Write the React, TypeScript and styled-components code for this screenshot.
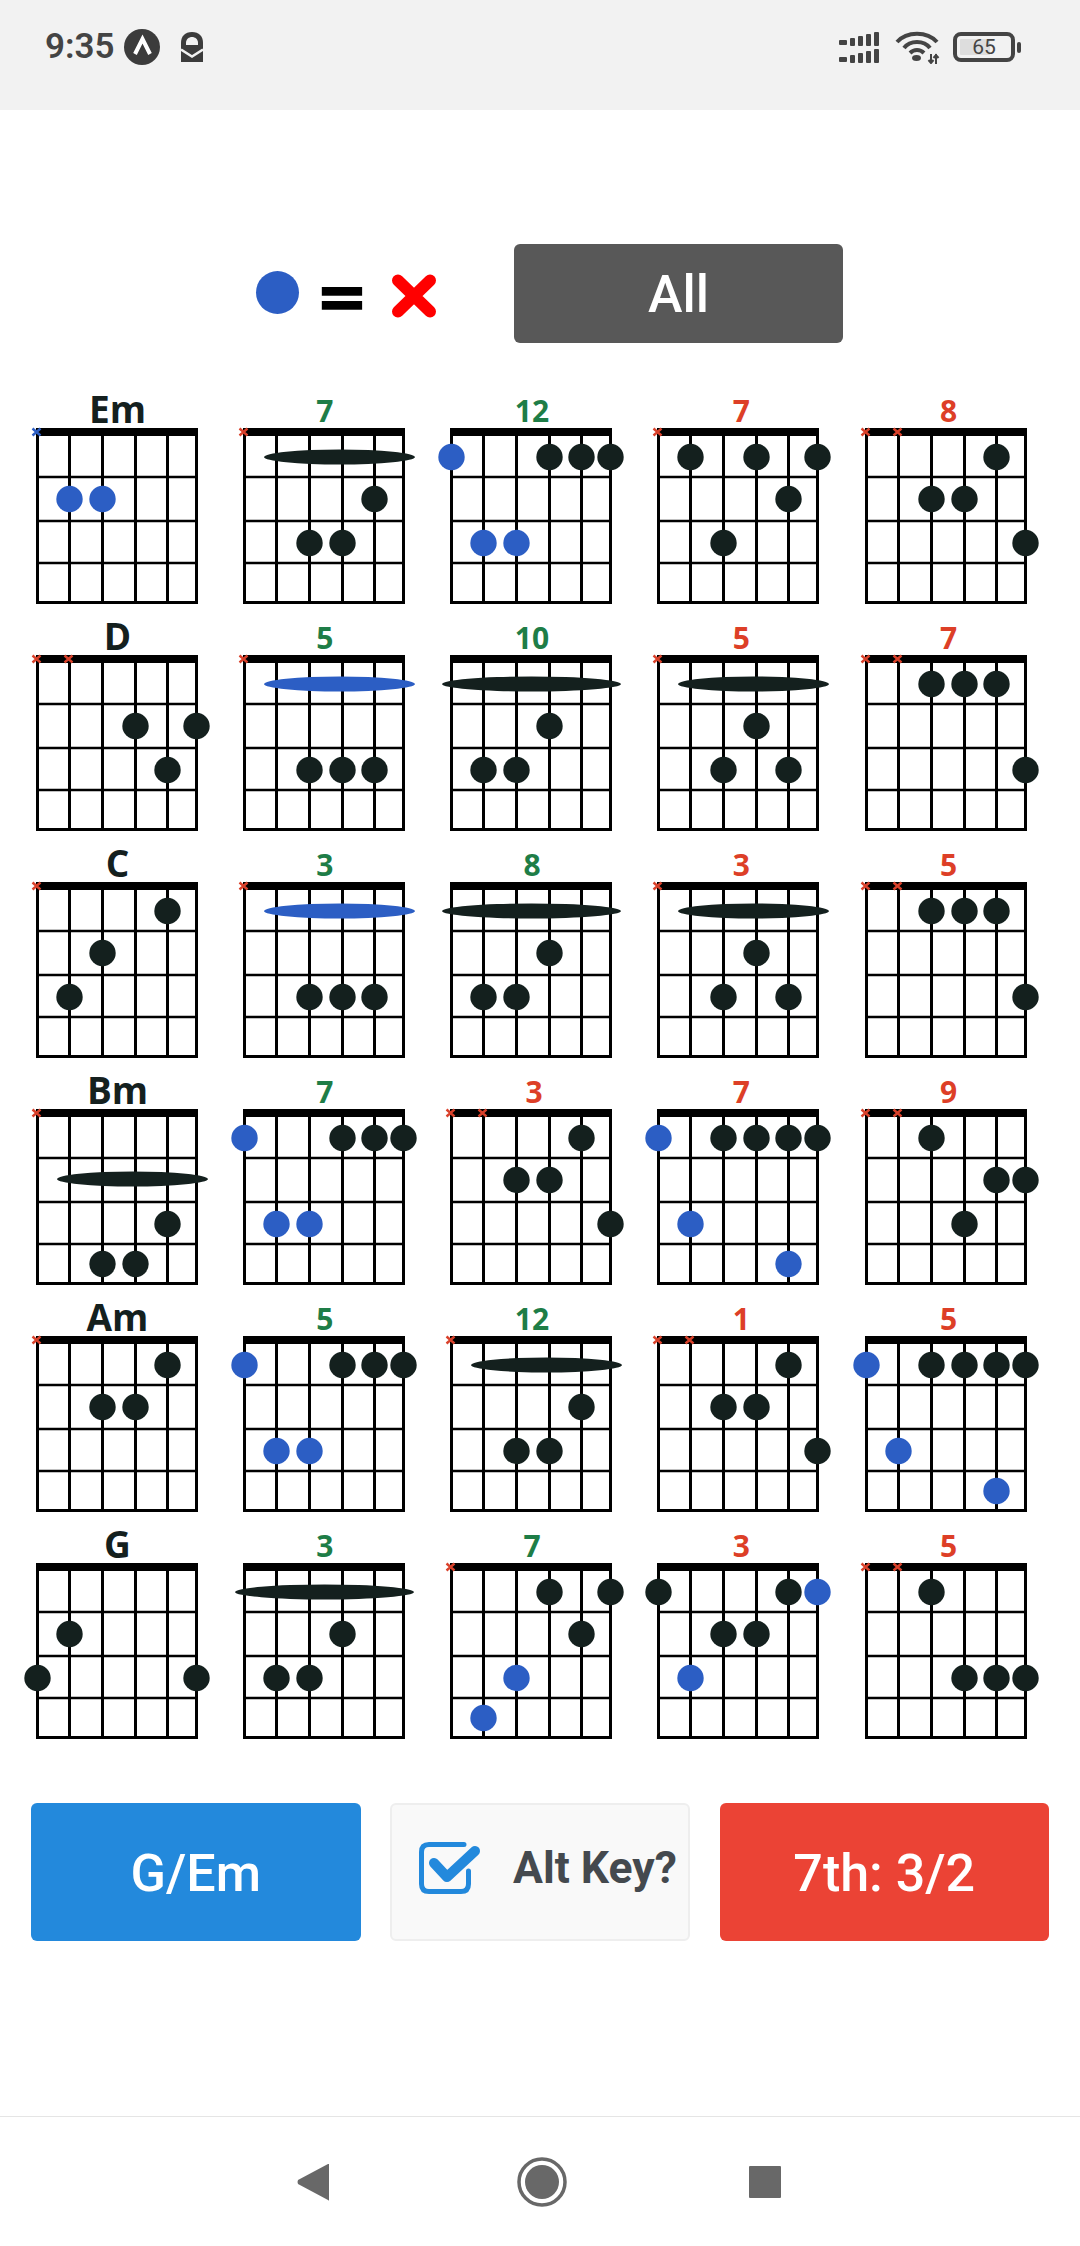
import * as React from 'react';
import styled, { createGlobalStyle } from 'styled-components';

const GlobalStyle = createGlobalStyle`
	html, body {
		margin: 0;
		padding: 0;
		background: #fff;
		font-family: Roboto, "Liberation Sans", sans-serif;
	}
`;

const BLUE = '#2c5ec4';
const DARK = '#14201e';

//Chord data: [string, fret, blue?]
type Dot = [number, number, boolean?];

interface Chord {
	label: string;
	tone: 'title' | 'green' | 'red';
	muted?: number[];
	mutedBlue?: boolean;
	barre?: { fret: number; wide?: boolean; blue?: boolean };
	dots: Dot[];
}

const chords: Chord[] = [
	// row 1
	{ label: 'Em', tone: 'title', muted: [0], mutedBlue: true, dots: [[1, 2, true], [2, 2, true]] },
	{ label: '7', tone: 'green', muted: [0], barre: { fret: 1 }, dots: [[4, 2], [2, 3], [3, 3]] },
	{ label: '12', tone: 'green', dots: [[0, 1, true], [3, 1], [4, 1], [5, 1], [1, 3, true], [2, 3, true]] },
	{ label: '7', tone: 'red', muted: [0], dots: [[1, 1], [3, 1], [5, 1], [4, 2], [2, 3]] },
	{ label: '8', tone: 'red', muted: [0, 1], dots: [[4, 1], [2, 2], [3, 2], [5, 3]] },
	// row 2
	{ label: 'D', tone: 'title', muted: [0, 1], dots: [[3, 2], [5, 2], [4, 3]] },
	{ label: '5', tone: 'green', muted: [0], barre: { fret: 1, blue: true }, dots: [[2, 3], [3, 3], [4, 3]] },
	{ label: '10', tone: 'green', barre: { fret: 1, wide: true }, dots: [[3, 2], [1, 3], [2, 3]] },
	{ label: '5', tone: 'red', muted: [0], barre: { fret: 1 }, dots: [[3, 2], [2, 3], [4, 3]] },
	{ label: '7', tone: 'red', muted: [0, 1], dots: [[2, 1], [3, 1], [4, 1], [5, 3]] },
	// row 3
	{ label: 'C', tone: 'title', muted: [0], dots: [[4, 1], [2, 2], [1, 3]] },
	{ label: '3', tone: 'green', muted: [0], barre: { fret: 1, blue: true }, dots: [[2, 3], [3, 3], [4, 3]] },
	{ label: '8', tone: 'green', barre: { fret: 1, wide: true }, dots: [[3, 2], [1, 3], [2, 3]] },
	{ label: '3', tone: 'red', muted: [0], barre: { fret: 1 }, dots: [[3, 2], [2, 3], [4, 3]] },
	{ label: '5', tone: 'red', muted: [0, 1], dots: [[2, 1], [3, 1], [4, 1], [5, 3]] },
	// row 4
	{ label: 'Bm', tone: 'title', muted: [0], barre: { fret: 2 }, dots: [[4, 3], [2, 4], [3, 4]] },
	{ label: '7', tone: 'green', dots: [[0, 1, true], [3, 1], [4, 1], [5, 1], [1, 3, true], [2, 3, true]] },
	{ label: '3', tone: 'red', muted: [0, 1], dots: [[4, 1], [2, 2], [3, 2], [5, 3]] },
	{ label: '7', tone: 'red', dots: [[0, 1, true], [2, 1], [3, 1], [4, 1], [5, 1], [1, 3, true], [4, 4, true]] },
	{ label: '9', tone: 'red', muted: [0, 1], dots: [[2, 1], [4, 2], [5, 2], [3, 3]] },
	// row 5
	{ label: 'Am', tone: 'title', muted: [0], dots: [[4, 1], [2, 2], [3, 2]] },
	{ label: '5', tone: 'green', dots: [[0, 1, true], [3, 1], [4, 1], [5, 1], [1, 3, true], [2, 3, true]] },
	{ label: '12', tone: 'green', muted: [0], barre: { fret: 1 }, dots: [[4, 2], [2, 3], [3, 3]] },
	{ label: '1', tone: 'red', muted: [0, 1], dots: [[4, 1], [2, 2], [3, 2], [5, 3]] },
	{ label: '5', tone: 'red', dots: [[0, 1, true], [2, 1], [3, 1], [4, 1], [5, 1], [1, 3, true], [4, 4, true]] },
	// row 6
	{ label: 'G', tone: 'title', dots: [[1, 2], [0, 3], [5, 3]] },
	{ label: '3', tone: 'green', barre: { fret: 1, wide: true }, dots: [[3, 2], [1, 3], [2, 3]] },
	{ label: '7', tone: 'green', muted: [0], dots: [[3, 1], [5, 1], [4, 2], [2, 3, true], [1, 4, true]] },
	{ label: '3', tone: 'red', dots: [[0, 1], [4, 1], [5, 1, true], [2, 2], [3, 2], [1, 3, true]] },
	{ label: '5', tone: 'red', muted: [0, 1], dots: [[2, 1], [3, 3], [4, 3], [5, 3]] }
];

const STRING_X = [1.5, 33.5, 66.5, 99.5, 131.5, 160.5];
const FRET_Y = [49, 93, 135, 174.5];
const DOT_Y = [0, 29, 71, 115, 155];

//Page
const Page = styled.div`
	width: 1080px;
	height: 2246px;
	display: flex;
	flex-direction: column;
	background: #fff;
	overflow: hidden;
`;

//Status bar
const StatusBar = styled.div`
	height: 94px;
	padding: 0 59px 16px 45px;
	background: #f2f2f2;
	display: flex;
	align-items: center;
	color: #444;
`;

const Clock = styled.span`
	font-size: 35px;
	font-weight: 600;
	line-height: 36px;
	margin-right: 9px;
`;

const StatusLeft = styled.div`
	display: flex;
	align-items: center;
	flex: 1;
`;

const StatusRight = styled.div`
	display: flex;
	align-items: center;
`;

const Battery = styled.div`
	box-sizing: border-box;
	width: 62px;
	height: 30px;
	margin-left: 13px;
	border: 4px solid #444;
	border-radius: 8px;
	background: linear-gradient(90deg, #ddd 0, #ddd 62%, #f2f2f2 62%);
	background-clip: content-box;
	padding: 3px;
	display: flex;
	align-items: center;
	justify-content: center;
	font-size: 21px;
	line-height: 16px;
	color: #444;
`;

const BatteryNub = styled.div`
	width: 4px;
	height: 11px;
	margin-left: 2px;
	border-radius: 2px;
	background: #444;
`;

//Legend row
const Legend = styled.div`
	display: flex;
	align-items: center;
	height: 99px;
	padding: 134px 0 0 256px;
`;

const LegendDot = styled.div`
	width: 43px;
	height: 43px;
	border-radius: 50%;
	background: ${BLUE};
	margin-top: -2px;
`;

const EqualsSign = styled.span`
	margin: 7px 0 0 17px;
	font-family: "DejaVu Sans", sans-serif;
	font-weight: 700;
	font-size: 62px;
	line-height: 60px;
	color: #000;
	-webkit-text-stroke: 1.5px #000;
`;

const LegendCross = styled.svg`
	margin: 4px 0 0 23px;
	flex: none;
`;

const AllButton = styled.div`
	box-sizing: border-box;
	width: 329px;
	height: 99px;
	margin-left: 77px;
	padding-top: 2px;
	border-radius: 6px;
	background: #585858;
	color: #fff;
	font-size: 52px;
	font-weight: 500;
	display: flex;
	align-items: center;
	justify-content: center;
`;

//Chord grid
const ChordGrid = styled.div`
	display: grid;
	grid-template-columns: repeat(5, 161px);
	grid-auto-rows: 227px;
	column-gap: 46.25px;
	padding: 34px 0 0 35.5px;
`;

const ChordCell = styled.div`
	display: flex;
	flex-direction: column;
`;

const toneColor = { title: DARK, green: '#1e7d47', red: '#dd3f27' };

const ChordLabel = styled.div<{ $tone: Chord['tone'] }>`
	box-sizing: border-box;
	height: 51px;
	padding: ${props => (props.$tone === 'title' ? 14 : 17)}px 0 0 ${props => (props.$tone === 'red' ? 7 : 3)}px;
	text-align: center;
	font-family: "Open Sans", sans-serif;
	font-weight: 700;
	font-size: ${props => (props.$tone === 'title' ? 37 : 30)}px;
	line-height: ${props => (props.$tone === 'title' ? 36 : 34)}px;
	color: ${props => toneColor[props.$tone]};
`;

const DiagramSvg = styled.svg`
	display: block;
	overflow: visible;
`;

const ChordDiagram: React.FC<{ chord: Chord }> = ({ chord }) => (
	<DiagramSvg width={161} height={176} viewBox="0 0 161 176">
		{STRING_X.map(x => (
			<rect key={x} x={x - 1.5} y={4} width={3} height={172} fill="#000" />
		))}
		{FRET_Y.map((y, i) => (
			<rect key={y} x={0} y={y - (i === 3 ? 1.5 : 1.25)} width={162} height={i === 3 ? 3 : 2.5} fill="#000" />
		))}
		<rect x={0} y={0} width={162} height={8} fill="#000" />
		{(chord.muted || []).map(s => (
			<path
				key={s}
				d={`M${STRING_X[s] - 5} 0.5 L${STRING_X[s] + 3} 7.5 M${STRING_X[s] + 3} 0.5 L${STRING_X[s] - 5} 7.5`}
				stroke={chord.mutedBlue ? BLUE : '#d9412b'}
				strokeWidth={2.4}
				fill="none"
			/>
		))}
		{chord.barre && (
			<ellipse
				cx={chord.barre.wide ? 81.5 : 96.5}
				cy={DOT_Y[chord.barre.fret] - (chord.barre.fret === 2 ? 1 : 0)}
				rx={chord.barre.wide ? 89.5 : 75.5}
				ry={7.5}
				fill={chord.barre.blue ? BLUE : DARK}
			/>
		)}
		{chord.dots.map(([s, f, blue]) => (
			<circle key={`${s}-${f}`} cx={STRING_X[s]} cy={DOT_Y[f]} r={13.2} fill={blue ? BLUE : DARK} />
		))}
	</DiagramSvg>
);

//Bottom action row
const Actions = styled.div`
	display: flex;
	justify-content: space-between;
	margin-top: 64px;
	padding: 0 31px;
`;

const ActionButton = styled.div<{ $color: string }>`
	box-sizing: border-box;
	width: 329.5px;
	height: 138px;
	padding-top: 2px;
	border-radius: 6px;
	background: ${props => props.$color};
	color: #fff;
	font-size: 52px;
	font-weight: 500;
	display: flex;
	align-items: center;
	justify-content: center;
`;

const AltToggle = styled.div`
	box-sizing: border-box;
	width: 300px;
	height: 138px;
	padding: 0 0 8px 27px;
	border: 2px solid #eee;
	border-radius: 6px;
	background: #f9f9f9;
	display: flex;
	align-items: center;
	color: #44494e;
	font-size: 44.5px;
	font-weight: 700;
	white-space: nowrap;
`;

const AltLabel = styled.span`
	margin-left: 32px;
`;

const AltCheck = styled.svg`
	flex: none;
`;

//Navigation bar
const NavBar = styled.div`
	margin-top: auto;
	height: 129px;
	border-top: 1px solid #e5e5e5;
	display: flex;
	align-items: center;
	justify-content: center;
	padding-right: 3px;
`;

const NavIcons = styled.svg`
	display: block;
`;

const MailIcon = styled.svg`
	margin-left: 21px;
`;

const WifiIcon = styled.svg`
	margin-left: 16px;
`;

const StatusIcons = {
	Arrow: () => (
		<svg width={36} height={36} viewBox="0 0 36 36">
			<circle cx={18} cy={18} r={18} fill="#3c3c3c" />
			<path d="M11 25 L18.5 10 L26 25" stroke="#fff" strokeWidth={4} fill="none" />
		</svg>
	),
	Mail: () => (
		<MailIcon width={22} height={30} viewBox="0 0 22 30">
			<path d="M0 11 C0 4 4 0 11 0 C18 0 22 4 22 11 V30 H0 Z" fill="#3c3c3c" />
			<path d="M5 13 V11 C5 7 8 5 11 5 C14 5 17 7 17 11 V13 Z" fill="#f2f2f2" />
			<path d="M0 17.5 L11 24.5 L22 17.5" stroke="#f2f2f2" strokeWidth={2.5} fill="none" />
		</MailIcon>
	),
	Signal: () => (
		<svg width={40} height={31} viewBox="0 0 40 31">
			{[0, 17].map(y => (
				<g key={y} fill="#444">
					<rect x={0} y={y + 8} width={8} height={5} rx={1} />
					<rect x={11} y={y + 6} width={5} height={8} rx={1} />
					<rect x={19} y={y + 4} width={5} height={10} rx={1} />
					<rect x={27} y={y + 2} width={5} height={12} rx={1} />
					<rect x={35} y={y} width={5} height={14} rx={1} />
				</g>
			))}
		</svg>
	),
	Wifi: () => (
		<WifiIcon width={45} height={33} viewBox="0 0 45 33">
			<g fill="none" stroke="#444" strokeWidth={4}>
				<path d="M2 11 C12 0 32 0 42 11" />
				<path d="M9 17 C15 9 29 9 35 17" />
				<path d="M15 22 C19 18 25 18 29 22" />
			</g>
			<ellipse cx={21.5} cy={27} rx={4.5} ry={3} fill="#444" />
			<path d="M36 23 V33 M41 23 V33 M33.5 29 L36 32 L38.5 29 M38.5 27 L41 24 L43.5 27" stroke="#444" strokeWidth={2} fill="none" />
		</WifiIcon>
	)
};

const App: React.FC = () => (
	<Page>
		<GlobalStyle />
		<StatusBar>
			<StatusLeft>
				<Clock>9:35</Clock>
				<StatusIcons.Arrow />
				<StatusIcons.Mail />
			</StatusLeft>
			<StatusRight>
				<StatusIcons.Signal />
				<StatusIcons.Wifi />
				<Battery>65</Battery>
				<BatteryNub />
			</StatusRight>
		</StatusBar>

		<Legend>
			<LegendDot />
			<EqualsSign>=</EqualsSign>
			<LegendCross width={46} height={46} viewBox="0 0 46 46">
				<path d="M7 7.5 L39 38.5 M39 7.5 L7 38.5" stroke="#f00" strokeWidth={12} strokeLinecap="round" />
			</LegendCross>
			<AllButton>All</AllButton>
		</Legend>

		<ChordGrid>
			{chords.map((chord, i) => (
				<ChordCell key={i}>
					<ChordLabel $tone={chord.tone}>{chord.label}</ChordLabel>
					<ChordDiagram chord={chord} />
				</ChordCell>
			))}
		</ChordGrid>

		<Actions>
			<ActionButton $color="#2389dc">G/Em</ActionButton>
			<AltToggle>
				<AltCheck width={62} height={52} viewBox="0 0 62 52">
					<path d="M45 2.5 H10 Q2.5 2.5 2.5 10 V42 Q2.5 49.5 10 49.5 H42 Q49.5 49.5 49.5 42 V29" fill="none" stroke="#2389dc" strokeWidth={5} strokeLinecap="round" />
					<path d="M15 21 L28 35 L56 9" fill="none" stroke="#2389dc" strokeWidth={10} strokeLinecap="round" strokeLinejoin="round" />
				</AltCheck>
				<AltLabel>Alt Key?</AltLabel>
			</AltToggle>
			<ActionButton $color="#eb4335">7th: 3/2</ActionButton>
		</Actions>

		<NavBar>
			<NavIcons width={484} height={50} viewBox="0 0 484 50">
				<path d="M32 7 L32 43 Q32 44 31 43 L1 27 Q0 25 1 23 L31 7 Z" fill="#686868" />
				<circle cx={245} cy={25} r={23} fill="none" stroke="#686868" strokeWidth={3.5} />
				<circle cx={245} cy={25} r={17} fill="#686868" />
				<rect x={452} y={9} width={32} height={32} rx={1} fill="#686868" />
			</NavIcons>
		</NavBar>
	</Page>
);

export default App;
